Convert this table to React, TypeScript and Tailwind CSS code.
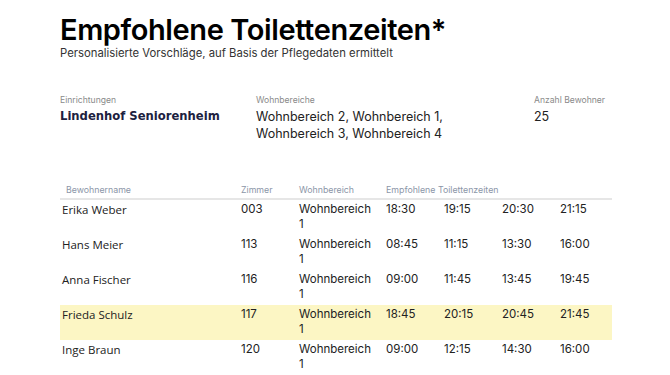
const residents = [
  { name: "Erika Weber", room: "003", area: "Wohnbereich 1", times: ["18:30", "19:15", "20:30", "21:15"] },
  { name: "Hans Meier", room: "113", area: "Wohnbereich 1", times: ["08:45", "11:15", "13:30", "16:00"] },
  { name: "Anna Fischer", room: "116", area: "Wohnbereich 1", times: ["09:00", "11:45", "13:45", "19:45"] },
  { name: "Frieda Schulz", room: "117", area: "Wohnbereich 1", times: ["18:45", "20:15", "20:45", "21:45"], highlight: true },
  { name: "Inge Braun", room: "120", area: "Wohnbereich 1", times: ["09:00", "12:15", "14:30", "16:00"] },
];

const cols = "grid grid-cols-[181px_58px_87px_58px_58px_58px_52px]";

export default function App() {
  return (
    <div className="w-[670px] h-[375px] overflow-hidden bg-white pl-[60px] pt-[13px] font-['Inter',sans-serif] text-[#222]">
      <h1 className="text-[29px] leading-[34px] font-semibold text-black tracking-[-0.4px]">
        Empfohlene Toilettenzeiten*
      </h1>
      <p className="text-[11.3px] leading-[14px] -mt-[1px] text-[#333]">
        Personalisierte Vorschläge, auf Basis der Pflegedaten ermittelt
      </p>

      {/* Stammdaten */}
      <div className="grid grid-cols-[196px_278px_1fr] mt-[34px]">
        <div>
          <div className="text-[8.6px] leading-[12px] text-[#8a8a8a]">Einrichtungen</div>
          <div className="mt-[2px] font-['DejaVu_Sans',sans-serif] font-bold text-[11.6px] leading-[17px] text-[#1c2140]">
            Lindenhof Seniorenheim
          </div>
        </div>
        <div>
          <div className="text-[8.6px] leading-[12px] text-[#8a8a8a]">Wohnbereiche</div>
          <div className="mt-[2px] text-[12.5px] leading-[17px] text-[#222]">
            Wohnbereich 2, Wohnbereich 1,
            <br />
            Wohnbereich 3, Wohnbereich 4
          </div>
        </div>
        <div>
          <div className="text-[8.6px] leading-[12px] text-[#8a8a8a]">Anzahl Bewohner</div>
          <div className="mt-[2px] text-[12.5px] leading-[17px] text-[#222]">25</div>
        </div>
      </div>

      {/* Tabelle */}
      <div className="mt-[42px] w-[552px]">
        <div className={`${cols} border-b-2 border-[#e6e6e6] pb-[2px] text-[8.8px] leading-[12px] text-[#8c96a8]`}>
          <div className="pl-[6px]">Bewohnername</div>
          <div>Zimmer</div>
          <div>Wohnbereich</div>
          <div className="col-span-4">Empfohlene Toilettenzeiten</div>
        </div>
        {residents.map((r) => (
          <div
            key={r.name}
            className={`${cols} pt-[2px] pb-[3px] text-[11.5px] leading-[15px] ${r.highlight ? "bg-[#fcf6c4]" : ""}`}
          >
            <div className="pl-[2px] font-['Open_Sans',sans-serif]">{r.name}</div>
            <div>{r.room}</div>
            <div className="pr-3">{r.area}</div>
            {r.times.map((t, i) => (
              <div key={i}>{t}</div>
            ))}
          </div>
        ))}
      </div>
    </div>
  );
}
